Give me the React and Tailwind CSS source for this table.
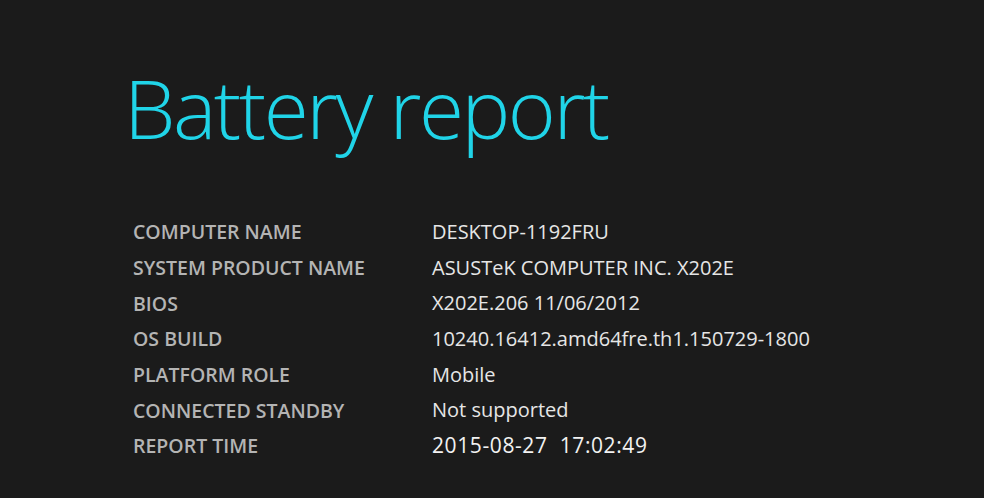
export default function App() {
  const rows = [
    ["COMPUTER NAME", "DESKTOP-1192FRU"],
    ["SYSTEM PRODUCT NAME", "ASUSTeK COMPUTER INC. X202E"],
    ["BIOS", "X202E.206 11/06/2012"],
    ["OS BUILD", "10240.16412.amd64fre.th1.150729-1800"],
    ["PLATFORM ROLE", "Mobile"],
    ["CONNECTED STANDBY", "Not supported"],
  ];
  return (
    <div className="w-[984px] h-[498px] bg-[#1b1b1b] overflow-hidden" style={{ fontFamily: '"Open Sans", "Noto Sans", sans-serif' }}>
      <div className="pl-[124px] pt-[52px]">
        <h1 className="text-[#20d4e8] text-[82px] leading-[110px] font-light tracking-[-2.5px]">Battery report</h1>
      </div>
      <div className="pl-[133px] pt-[52px]">
        {rows.map(([k, v]) => (
          <div key={k} className="flex h-[35.7px] items-center">
            <div className="w-[299px] text-[#b4b4b4] text-[19.5px] font-semibold">{k}</div>
            <div className="text-[#e6e6e6] text-[20px]">{v}</div>
          </div>
        ))}
        <div className="flex h-[35.7px] items-center">
          <div className="w-[299px] text-[#b4b4b4] text-[19.5px] font-semibold">REPORT TIME</div>
          <div className="text-[#f2f2f2] text-[21px] font-medium whitespace-pre tracking-[0.6px]">2015-08-27  17:02:49</div>
        </div>
      </div>
    </div>
  );
}
